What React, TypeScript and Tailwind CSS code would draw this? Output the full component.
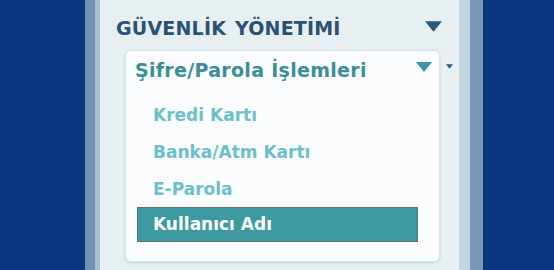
import React from "react";

const items = ["Kredi Kartı", "Banka/Atm Kartı", "E-Parola"];

function Caret({ className }: { className: string }) {
  return (
    <svg viewBox="0 0 18 11" className={className}>
      <path d="M0 0 H18 L9 11 Z" fill="currentColor" />
    </svg>
  );
}

export default function App() {
  return (
    <div className="w-[554px] h-[270px] flex bg-[#0b3680] overflow-hidden" style={{ fontFamily: "'DejaVu Sans', 'Open Sans', sans-serif" }}>
      <div className="w-[85px] shrink-0" />
      <div className="w-[10px] shrink-0 bg-[#7191b5]" />
      <div className="w-[5px] shrink-0 bg-[#a9bece]" />

      {/* main panel */}
      <div className="relative w-[359px] shrink-0 bg-[#e7eff3]">
        <div className="flex items-center justify-between pl-4 pr-[17px] pt-[13px] h-[40px]">
          <span className="mt-[4px] text-[19px] font-bold text-[#2a5274] tracking-[0.2px] [word-spacing:2px]">GÜVENLİK YÖNETİMİ</span>
          <Caret className="w-[17px] h-[11px] text-[#2c5779]" />
        </div>

        <Caret className="absolute left-[346px] top-[62px] w-[7px] h-[9px] text-[#2c5779]" />

        <div className="ml-[25px] mr-[19px] mt-[10px] h-[212px] rounded-md bg-[#fafcfd] border border-[#d6e5eb] shadow-[0_1px_3px_rgba(120,160,180,0.35)]">
          <div className="flex items-center justify-between pl-[9px] pr-[6px] pt-[5px] h-[34px]">
            <span className="text-[19px] font-bold text-[#3a8f9a] tracking-[0.3px]">Şifre/Parola İşlemleri</span>
            <Caret className="w-[18px] h-[10px] text-[#3f98a2] -mt-[7px]" />
          </div>
          <div className="flex flex-col pt-[12px]">
            {items.map((t) => (
              <div key={t} className="h-[37px] pl-[27px] flex items-center text-[17px] font-bold text-[#6cc0cb]">
                {t}
              </div>
            ))}
          </div>
          <div className="ml-[11px] mr-[21px] h-[35px] -mt-[1px] bg-[#3d9aa0] border border-[#6b6b6b] pl-[15px] flex items-center text-[17px] font-bold text-white">
            Kullanıcı Adı
          </div>
        </div>
      </div>

      <div className="w-[11px] shrink-0 bg-[#c4d5df]" />
      <div className="w-[13px] shrink-0 bg-[#7b98b7]" />
    </div>
  );
}
